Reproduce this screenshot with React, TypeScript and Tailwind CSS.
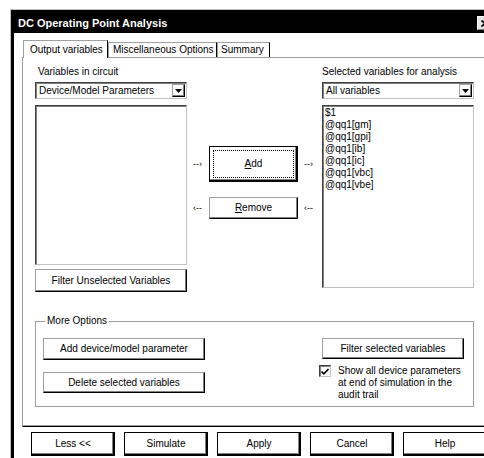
import React from 'react';

const btn3d =
  'flex items-center justify-center bg-white border border-t-[#a0a0a0] border-l-[#a0a0a0] border-r-black border-b-black shadow-[inset_-1px_-1px_0_#808080]';
const sunken =
  'bg-white border border-t-[#404040] border-l-[#404040] border-r-[#c0c0c0] border-b-[#c0c0c0] shadow-[inset_1px_1px_0_#808080]';

function Combo({ value }: { value: string }) {
  return (
    <div className={`mt-[4px] h-[17px] w-[152px] flex items-center ${sunken}`}>
      <span className="flex-1 pl-[3px] leading-[12px]">{value}</span>
      <div className={`${btn3d} w-[13px] h-[13px] mr-[1px]`}>
        <svg width="7" height="4" viewBox="0 0 7 4">
          <path d="M0 0h7L3.5 4z" fill="#000" />
        </svg>
      </div>
    </div>
  );
}

function Arrow({ text, className }: { text: string; className: string }) {
  return <span className={`text-[9px] leading-none ${className}`}>{text}</span>;
}

const selected = ['$1', '@qq1[gm]', '@qq1[gpi]', '@qq1[ib]', '@qq1[ic]', '@qq1[vbc]', '@qq1[vbe]'];
const footer = ['Less <<', 'Simulate', 'Apply', 'Cancel', 'Help'];

export default function App() {
  return (
    <div className="w-[484px] h-[458px] overflow-hidden bg-white text-black text-[10px] leading-[12px] font-['Liberation_Sans',Arial,sans-serif]">
      <div className="ml-[10px] mt-[9px] w-[500px] h-[460px] border-t border-l border-[#c0c0c0]">
        <div className="h-full border-t-[3px] border-l-[3px] border-black">
          {/* title bar */}
          <div className="h-[20px] bg-black flex items-center">
            <span className="w-[463px] pl-[4px] text-white font-bold text-[11px]">DC Operating Point Analysis</span>
            <div className="w-[16px] h-[14px] bg-[#e4e4e4] border border-t-white border-l-white border-r-[#808080] border-b-[#808080] flex items-center justify-center">
              <svg width="8" height="7" viewBox="0 0 8 7">
                <path d="M0.5 0.5l7 6M7.5 0.5l-7 6" stroke="#000" strokeWidth="1.8" />
              </svg>
            </div>
          </div>

          <div className="pl-[8px] pt-[7px]">
            {/* tabs */}
            <div className="flex items-end h-[17px]">
              <div className="relative z-10 -mb-px ml-[1px] w-[85px] h-[18px] bg-white border-t border-l border-[#a0a0a0] border-r border-r-black flex items-center pl-[6px]">
                Output variables
              </div>
              <div className="w-[109px] h-[15px] border-t border-l border-[#a0a0a0] border-r border-r-black flex items-center pl-[4px]">
                Miscellaneous Options
              </div>
              <div className="w-[53px] h-[15px] border-t border-l border-[#a0a0a0] border-r border-r-black flex items-center pl-[3px]">
                Summary
              </div>
            </div>

            {/* tab panel */}
            <div className="w-[480px] h-[370px] border-t border-l border-[#a0a0a0] border-b border-b-black shadow-[inset_0_-1px_0_#a0a0a0] pl-[12px] pt-[8px]">
              <div className="flex">
                {/* left column */}
                <div className="w-[152px]">
                  <div className="pl-[3px]">Variables in circuit</div>
                  <Combo value="Device/Model Parameters" />
                  <div className={`mt-[6px] h-[160px] ${sunken}`} />
                  <div className={`mt-[4px] h-[23px] ${btn3d}`}>Filter Unselected Variables</div>
                </div>

                {/* middle */}
                <div className="w-[135px] pt-[80px]">
                  <div className="flex items-center">
                    <Arrow text="--›" className="w-[22px] pl-[6px]" />
                    <div className="w-[89px] h-[36px] border border-black shadow-[inset_-1px_-1px_0_#000,inset_-2px_-2px_0_#808080] p-[3px] flex">
                      <div className="flex-1 border border-dotted border-black flex items-center justify-center">
                        <span>
                          <span className="underline">A</span>dd
                        </span>
                      </div>
                    </div>
                    <Arrow text="--›" className="w-[24px] pl-[6px]" />
                  </div>
                  <div className="flex items-center mt-[15px]">
                    <Arrow text="‹--" className="w-[22px] pl-[6px]" />
                    <div className={`w-[89px] h-[22px] ${btn3d}`}>
                      <span>
                        <span className="underline">R</span>emove
                      </span>
                    </div>
                    <Arrow text="‹--" className="w-[24px] pl-[6px]" />
                  </div>
                </div>

                {/* right column */}
                <div className="w-[152px]">
                  <div>Selected variables for analysis</div>
                  <Combo value="All variables" />
                  <div className={`mt-[6px] h-[183px] pl-[2px] pt-[1px] ${sunken}`}>
                    {selected.map(s => (
                      <div key={s} className="leading-[12px]">
                        {s}
                      </div>
                    ))}
                  </div>
                </div>
              </div>

              {/* More Options group */}
              <div className="mt-[29px] w-[439px] h-[86px] border border-[#a0a0a0]">
                <div className="-mt-[7px] ml-[9px] px-[2px] w-fit bg-white">More Options</div>
                <div className="flex mt-[11px]">
                  <div className="ml-[7px] w-[162px]">
                    <div className={`h-[22px] ${btn3d}`}>Add device/model parameter</div>
                    <div className={`mt-[12px] h-[21px] ${btn3d}`}>Delete selected variables</div>
                  </div>
                  <div className="ml-[117px]">
                    <div className={`w-[142px] h-[21px] ${btn3d}`}>Filter selected variables</div>
                    <div className="flex mt-[6px] -ml-[3px]">
                      <div className={`w-[12px] h-[12px] flex items-center justify-center ${sunken}`}>
                        <svg width="8" height="7" viewBox="0 0 8 7">
                          <path d="M0.5 3.5l2.3 2.3L7.5 1" stroke="#000" strokeWidth="1.6" fill="none" />
                        </svg>
                      </div>
                      <div className="ml-[7px] leading-[12px]">
                        Show all device parameters
                        <br />
                        at end of simulation in the
                        <br />
                        audit trail
                      </div>
                    </div>
                  </div>
                </div>
              </div>
            </div>

            {/* footer buttons */}
            <div className="flex gap-[9px] ml-[9px] mt-[5px]">
              {footer.map(f => (
                <div
                  key={f}
                  className="w-[84px] h-[24px] border border-black shadow-[inset_-1px_-1px_0_#000,inset_-2px_-2px_0_#808080] flex items-center justify-center"
                >
                  {f}
                </div>
              ))}
            </div>
          </div>
        </div>
      </div>
    </div>
  );
}
